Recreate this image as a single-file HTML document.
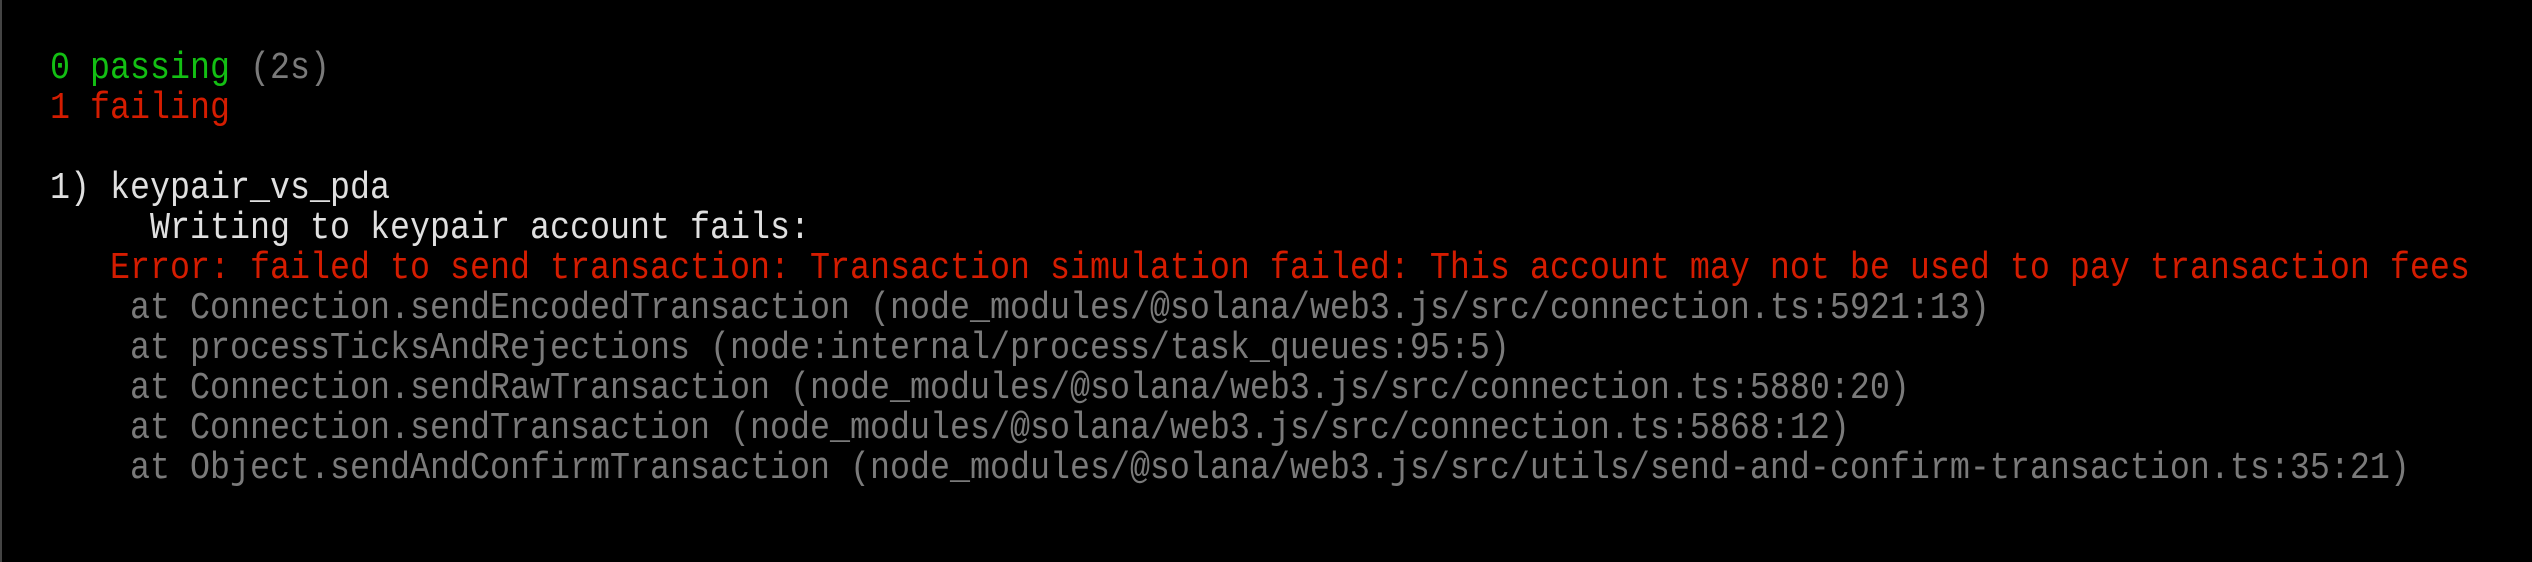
<!DOCTYPE html>
<html><head><meta charset="utf-8"><style>
html,body{margin:0;padding:0;background:#000;}
body{width:2532px;height:562px;overflow:hidden;position:relative;border-left:2px solid #444;box-sizing:border-box;}
pre{margin:0;position:absolute;left:48px;top:49px;font-family:"Liberation Mono",monospace;font-size:38px;line-height:40px;color:#e0e0e0;white-space:pre;transform:scaleX(0.877);transform-origin:0 0;}
.g{color:#13bf13}.r{color:#d41c00}.d{color:#7a7a7a}
</style></head><body>
<pre><span class="g">0 passing</span><span class="d"> (2s)</span>
<span class="r">1 failing</span>

1) keypair_vs_pda
     Writing to keypair account fails:
<span class="r">   Error: failed to send transaction: Transaction simulation failed: This account may not be used to pay transaction fees</span>
<span class="d">    at Connection.sendEncodedTransaction (node_modules/@solana/web3.js/src/connection.ts:5921:13)
    at processTicksAndRejections (node:internal/process/task_queues:95:5)
    at Connection.sendRawTransaction (node_modules/@solana/web3.js/src/connection.ts:5880:20)
    at Connection.sendTransaction (node_modules/@solana/web3.js/src/connection.ts:5868:12)
    at Object.sendAndConfirmTransaction (node_modules/@solana/web3.js/src/utils/send-and-confirm-transaction.ts:35:21)</span></pre>
</body></html>
